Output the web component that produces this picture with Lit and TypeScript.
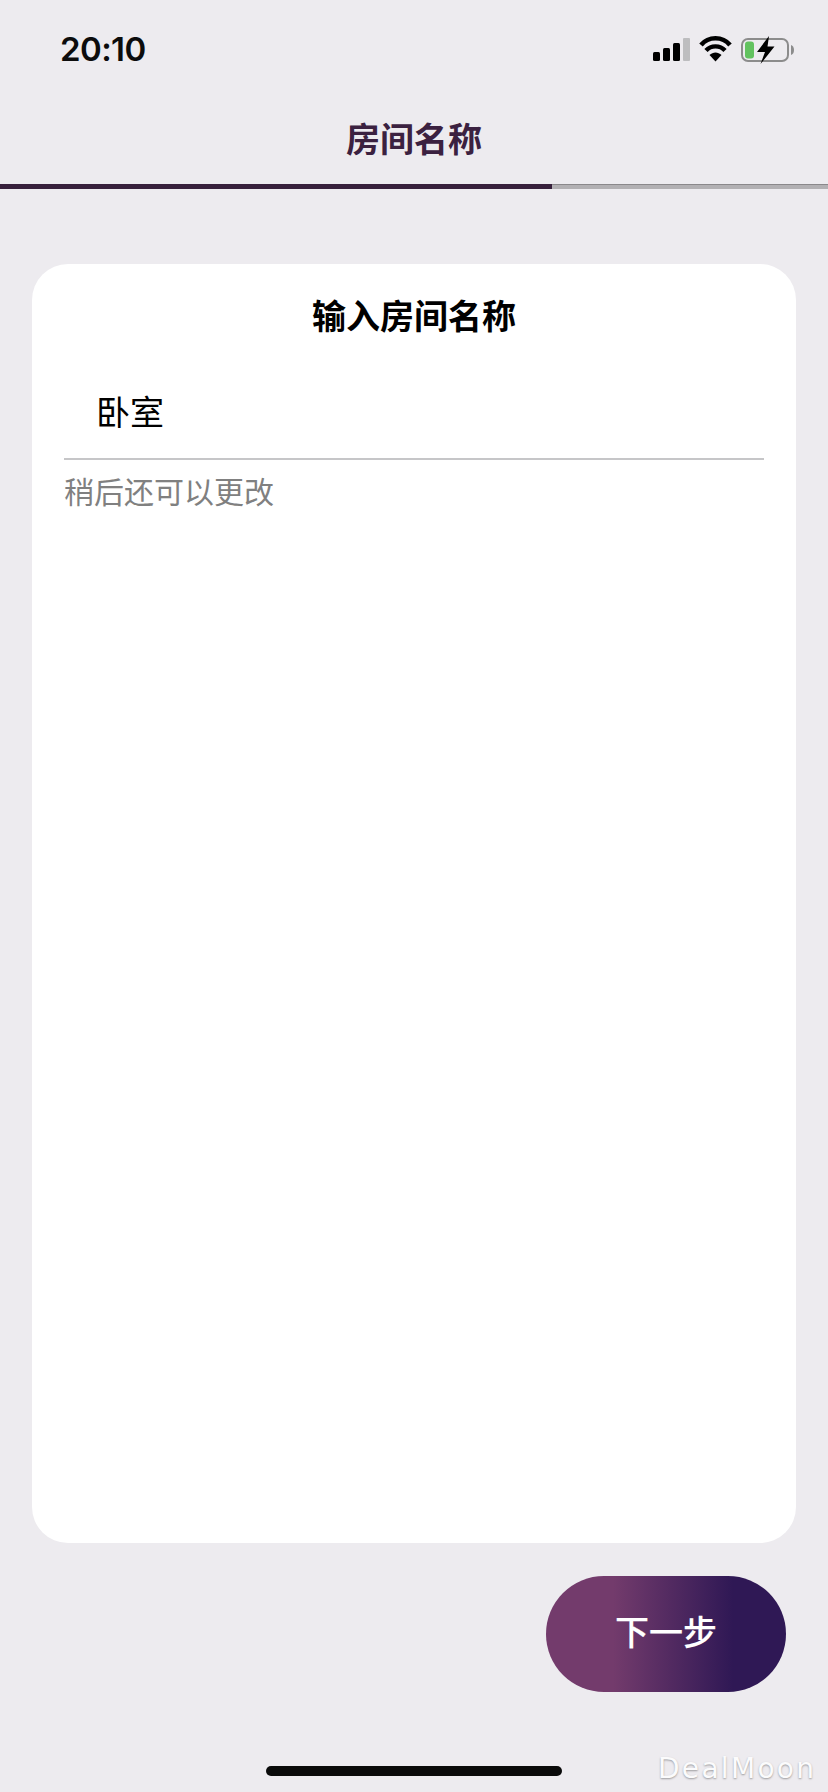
import { LitElement, html, css } from "lit";
import { customElement } from "lit/decorators.js";

@customElement("app-root")
export class AppRoot extends LitElement {
  static styles = css`
    :host {
      display: block;
      width: 828px;
      height: 1792px;
      background: #edebef;
      position: relative;
      overflow: hidden;
      font-family: "Noto Sans CJK SC", "Noto Sans CJK JP", sans-serif;
    }
    .page { display: flex; flex-direction: column; height: 1792px; }
    .status {
      height: 98px;
      padding: 0 34px 0 60px;
      box-sizing: border-box;
      display: flex;
      justify-content: space-between;
      align-items: flex-start;
      flex: none;
    }
    .time {
      font-family: Inter, "Liberation Sans", sans-serif;
      font-size: 33px;
      font-weight: 600;
      line-height: 40px;
      margin-top: 29px;
      color: #0c0c0c;
      letter-spacing: -0.6px;
    }
    .icons { margin-top: 30px; display: block; }
    .nav {
      height: 86px;
      flex: none;
      box-sizing: border-box;
      display: flex;
      justify-content: center;
      align-items: flex-start;
      font-size: 34px;
      font-weight: 700;
      line-height: 50px;
      color: #3b2140;
      padding-top: 15px;
    }
    .progress {
      height: 5px;
      flex: none;
      background: #b2b0b3;
      border-top: 1px solid #8a888b;
      box-sizing: border-box;
    }
    .progress-fill {
      height: 5px;
      width: 552px;
      background: #37203c;
      margin-top: -1px;
    }
    .card {
      flex: none;
      margin: 75px 32px 0;
      height: 1279px;
      background: #fff;
      border-radius: 36px;
      box-sizing: border-box;
      padding: 0 32px;
      display: flex;
      flex-direction: column;
    }
    .card-title {
      text-align: center;
      font-size: 34px;
      font-weight: 700;
      line-height: 50px;
      color: #000;
      margin-top: 26px;
    }
    .field {
      font-size: 34px;
      line-height: 50px;
      color: #000;
      padding: 46px 0 22px 32px;
      border-bottom: 2px solid #c6c6c8;
    }
    .hint {
      font-size: 30px;
      line-height: 44px;
      color: #808080;
      margin-top: 8px;
    }
    .footer {
      display: flex;
      justify-content: flex-end;
      padding: 33px 42px 0 0;
      flex: none;
    }
    .next {
      width: 240px;
      height: 116px;
      box-sizing: border-box;
      border-radius: 58px;
      padding-bottom: 8px;
      background: linear-gradient(90deg, #733b6c 0%, #733b6c 28%, #2f1855 78%, #2f1855 100%);
      color: #fff;
      font-size: 34px;
      font-weight: 500;
      -webkit-text-stroke: 0.15px #fff;
      display: flex;
      align-items: center;
      justify-content: center;
    }
    .home-wrap {
      flex: none;
      display: flex;
      justify-content: center;
      padding-top: 74px;
    }
    .home {
      width: 296px;
      height: 10px;
      border-radius: 5px;
      background: #0a0a0a;
    }
    .watermark {
      position: absolute;
      left: 658px;
      top: 1752px;
      font-family: "DejaVu Sans", sans-serif;
      font-size: 28px;
      line-height: 34px;
      letter-spacing: 2.3px;
      color: #fbfbfc;
      text-shadow: 0 1px 2px rgba(0, 0, 0, 0.35);
    }
  `;

  render() {
    return html`
      <div class="page">
        <div class="status">
          <div class="time">20:10</div>
          <svg class="icons" width="142" height="34" viewBox="0 0 142 34">
            <rect x="1" y="22" width="7" height="9" rx="1.5" fill="#000"/>
            <rect x="11" y="18" width="7" height="13" rx="1.5" fill="#000"/>
            <rect x="21" y="13" width="7" height="18" rx="1.5" fill="#000"/>
            <rect x="31" y="8" width="7" height="23" rx="1" fill="#bdbdbf"/>
            <path d="M49 15 C56.5 6 70.5 6 78 15" fill="none" stroke="#000" stroke-width="4.6"/>
            <path d="M54 20.5 C59 15 68 15 73 20.5" fill="none" stroke="#000" stroke-width="4.4"/>
            <path d="M57.5 25 C61 21.5 66 21.5 69.5 25 L63.5 31.5 Z" fill="#000"/>
            <rect x="90" y="9" width="46" height="22" rx="6" fill="none" stroke="#8c8c8c" stroke-width="2"/>
            <rect x="93" y="11.5" width="9" height="17" rx="3" fill="#62c25f"/>
            <path d="M139 15 Q142 16 142 20 Q142 24 139 25 Z" fill="#8c8c8c"/>
            <path d="M117 6 L105 22 H113 L108.5 34 L122.5 16.5 H115.5 Z" fill="#000"/>
          </svg>
        </div>
        <div class="nav">房间名称</div>
        <div class="progress"><div class="progress-fill"></div></div>
        <div class="card">
          <div class="card-title">输入房间名称</div>
          <div class="field">卧室</div>
          <div class="hint">稍后还可以更改</div>
        </div>
        <div class="footer">
          <div class="next">下一步</div>
        </div>
        <div class="home-wrap"><div class="home"></div></div>
      </div>
      <div class="watermark">DealMoon</div>
    `;
  }
}
